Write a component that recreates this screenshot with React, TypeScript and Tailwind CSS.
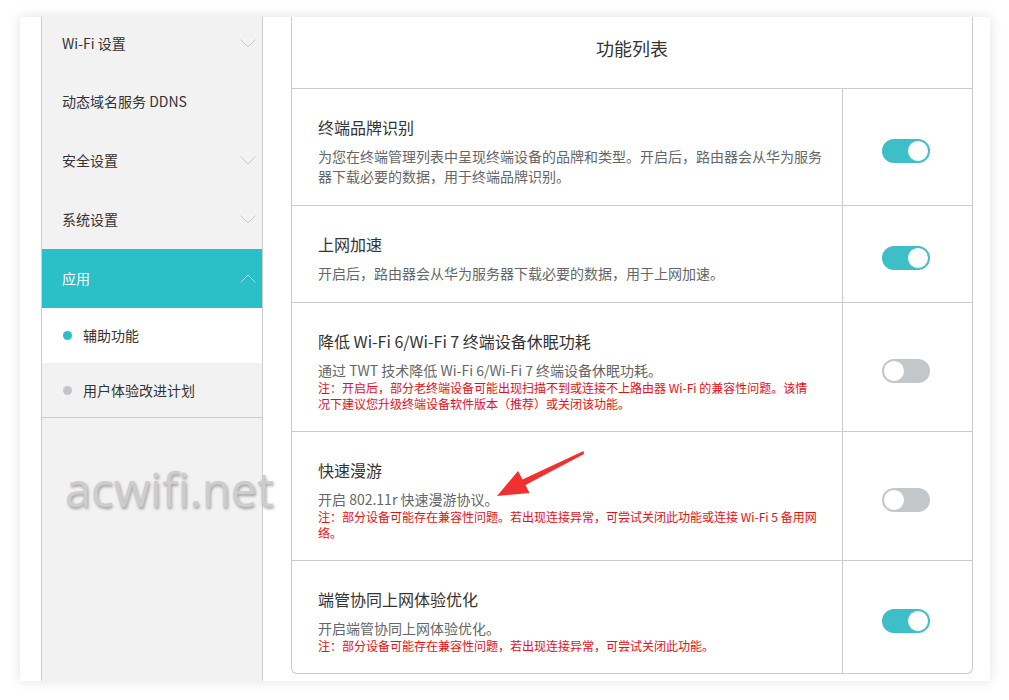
import React from "react";

type Feature = {
  title: string;
  desc: string[];
  note?: string[];
  on: boolean;
};

const features: Feature[] = [
  {
    title: "终端品牌识别",
    desc: [
      "为您在终端管理列表中呈现终端设备的品牌和类型。开启后，路由器会从华为服务",
      "器下载必要的数据，用于终端品牌识别。",
    ],
    on: true,
  },
  {
    title: "上网加速",
    desc: ["开启后，路由器会从华为服务器下载必要的数据，用于上网加速。"],
    on: true,
  },
  {
    title: "降低 Wi-Fi 6/Wi-Fi 7 终端设备休眠功耗",
    desc: ["通过 TWT 技术降低 Wi-Fi 6/Wi-Fi 7 终端设备休眠功耗。"],
    note: [
      "注：开启后，部分老终端设备可能出现扫描不到或连接不上路由器 Wi-Fi 的兼容性问题。该情",
      "况下建议您升级终端设备软件版本（推荐）或关闭该功能。",
    ],
    on: false,
  },
  {
    title: "快速漫游",
    desc: ["开启 802.11r 快速漫游协议。"],
    note: [
      "注：部分设备可能存在兼容性问题。若出现连接异常，可尝试关闭此功能或连接 Wi-Fi 5 备用网",
      "络。",
    ],
    on: false,
  },
  {
    title: "端管协同上网体验优化",
    desc: ["开启端管协同上网体验优化。"],
    note: ["注：部分设备可能存在兼容性问题，若出现连接异常，可尝试关闭此功能。"],
    on: true,
  },
];

const Chevron: React.FC<{ up?: boolean }> = ({ up }) => (
  <svg width="16" height="9" viewBox="0 0 16 9" fill="none">
    {up ? (
      <path d="M0.5 8.5 L8 1 L15.5 8.5" stroke="rgba(255,255,255,0.55)" strokeWidth="1" />
    ) : (
      <path d="M0.5 0.5 L8 8 L15.5 0.5" stroke="#c8c8c8" strokeWidth="1" />
    )}
  </svg>
);

const Toggle: React.FC<{ on: boolean }> = ({ on }) => (
  <div
    className={`relative w-[48px] h-[24px] rounded-full ${
      on ? "bg-[#3ebec6]" : "bg-[#c3c7c9]"
    }`}
  >
    <span
      className={`absolute top-[1px] w-[22px] h-[22px] rounded-full bg-white ${
        on ? "right-[1px] border border-[#3ebec6]" : "left-[1px] border border-[#c3c7c9]"
      }`}
    />
  </div>
);

const Sidebar: React.FC = () => (
  <div className="w-[222px] shrink-0 border-x border-[#cccccc] bg-[#f2f2f2] text-[14px] text-[#333]">
    <div className="h-[55px] pb-[3px] flex items-center justify-between pl-[20px] pr-[6px]">
      <span>Wi-Fi 设置</span>
      <Chevron />
    </div>
    <div className="h-[59px] flex items-center pl-[20px]">动态域名服务 DDNS</div>
    <div className="h-[59px] flex items-center justify-between pl-[20px] pr-[6px]">
      <span>安全设置</span>
      <Chevron />
    </div>
    <div className="h-[59px] flex items-center justify-between pl-[20px] pr-[6px]">
      <span>系统设置</span>
      <Chevron />
    </div>
    <div className="h-[59px] flex items-center justify-between pl-[20px] pr-[6px] bg-[#2bbfc7] text-white">
      <span>应用</span>
      <Chevron up />
    </div>
    <div className="h-[55px] flex items-center pl-[21px] bg-white">
      <span className="w-[9px] h-[9px] rounded-full bg-[#2bbfc7]" />
      <span className="ml-[11px]">辅助功能</span>
    </div>
    <div className="h-[55px] flex items-center pl-[21px] border-b border-[#cccccc]">
      <span className="w-[9px] h-[9px] rounded-full bg-[#c4c4cc]" />
      <span className="ml-[11px]">用户体验改进计划</span>
    </div>
  </div>
);

const FeatureTable: React.FC = () => (
  <div className="border-x border-b border-[#cccccc] rounded-b-[6px] bg-white">
    <div className="h-[72px] border-b border-[#cccccc] pt-[19px] text-center text-[18px] leading-[24px] text-[#333]">
      功能列表
    </div>
    {features.map((f, i) => (
      <div
        key={f.title}
        className={`flex ${i < features.length - 1 ? "border-b border-[#cccccc]" : ""}`}
      >
        <div className="flex-1 pl-[26px] pt-[28px] pb-[19px] whitespace-nowrap">
          <div className="text-[16px] leading-[20px] text-[#333]">{f.title}</div>
          <div className="mt-[9px] text-[14px] leading-[20px] text-[#666]">
            {f.desc.map((d) => (
              <div key={d}>{d}</div>
            ))}
          </div>
          {f.note && (
            <div className="text-[12px] leading-[16px] text-[#e50f14]">
              {f.note.map((n) => (
                <div key={n}>{n}</div>
              ))}
            </div>
          )}
        </div>
        <div className="w-[130px] shrink-0 border-l border-[#cccccc] flex items-center justify-center pt-[7px] pr-[4px]">
          <Toggle on={f.on} />
        </div>
      </div>
    ))}
  </div>
);

export default function App() {
  return (
    <div
      className="relative w-[1009px] h-[700px] bg-white pt-[17px] pl-[20px] overflow-hidden"
      style={{ fontFamily: '"Noto Sans CJK SC", "Noto Sans", sans-serif' }}
    >
      <div className="w-[970px] h-[664px] bg-white shadow-[0_0_12px_rgba(0,0,0,0.12)] flex pl-[21px] overflow-hidden">
        <Sidebar />
        <div className="flex-1 pl-[28px] pr-[17px]">
          <FeatureTable />
        </div>
      </div>

      <div
        className="absolute left-[65px] top-[466px] text-[47px] leading-none text-[#cdcdcd] [text-shadow:1px_2px_3px_rgba(0,0,0,0.35)] pointer-events-none"
        style={{ fontFamily: '"Open Sans", sans-serif' }}
      >
        acwifi.net
      </div>

      <svg
        className="absolute left-0 top-0 pointer-events-none"
        width="1009"
        height="700"
        viewBox="0 0 1009 700"
      >
        <polygon
          points="497,496 518,471 522.5,479.5 583.5,451 584,454 525.5,485 529.5,493"
          fill="#f2302f"
        />
      </svg>
    </div>
  );
}
